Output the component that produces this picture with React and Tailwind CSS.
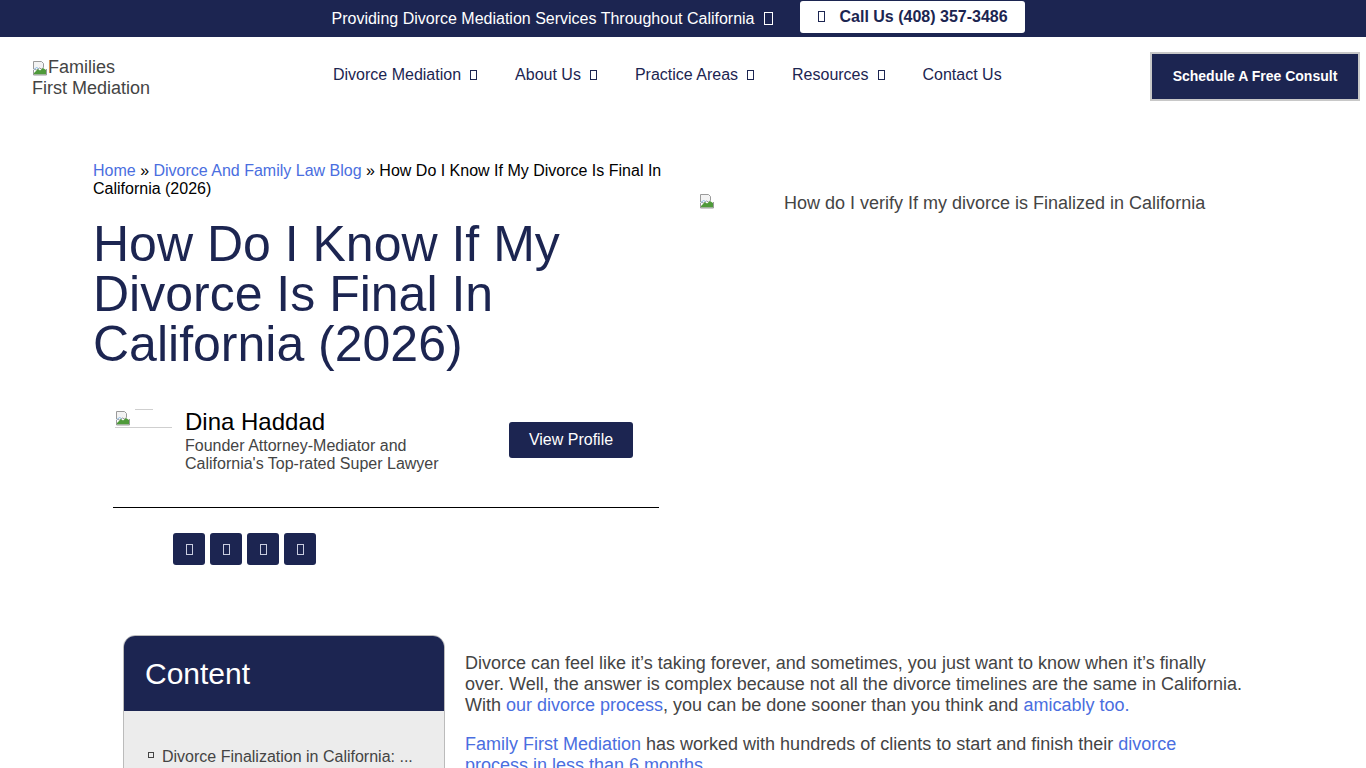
import React from "react";

function BrokenImg({ className = "" }) {
  return (
    <svg width="16" height="16" viewBox="0 0 16 16" className={className}>
      <path d="M1.5 1.5h8l2 2v4l-2 1.5-2-1-3 2-3-1z" fill="#f3f3f3" stroke="#9a9a9a" strokeWidth="1" />
      <path d="M2 13l4-4 2 1.5 3-2.5 3 2v4.5H2z" fill="#4f9a3a" />
      <path d="M2 9.5l2.5-2 2 1" fill="none" stroke="#8bbbe8" strokeWidth="1" />
      <path d="M1.5 10v5h13V9" fill="none" stroke="#9a9a9a" strokeWidth="1" />
    </svg>
  );
}

export default function App() {
  const font = { fontFamily: '"Liberation Sans", Arial, sans-serif' };
  return (
    <div className="w-[1366px] bg-white" style={font}>
      {/* Top bar */}
      <div className="h-[37px] bg-[#1c2551] flex items-center justify-center">
        <div className="flex items-center text-white text-[16px] ml-[-10px]">
          <span>Providing Divorce Mediation Services Throughout California</span>
          <span className="inline-block w-[9px] h-[13px] border border-white ml-[9px]" />
        </div>
        <div className="ml-[27px] h-[32px] mt-[-4px] w-[225px] bg-white rounded-[3px] flex items-center text-[#1c2551] text-[16px] font-bold">
          <span className="inline-block w-[7px] h-[11px] border border-[#1c2551] ml-[18px]" />
          <span className="ml-[15px]">Call Us (408) 357-3486</span>
        </div>
      </div>

      {/* Header */}
      <div className="h-[76px] flex items-center">
        <div className="w-[333px] shrink-0 pl-[32px] text-[18px] leading-[21px] text-[#444] self-start pt-[20px]">
          <div className="flex items-center">
            <BrokenImg />
            <span>Families</span>
          </div>
          <div>First Mediation</div>
        </div>
        <nav className="flex items-center gap-[38px] text-[16px] text-[#1c2551]">
          {["Divorce Mediation", "About Us", "Practice Areas", "Resources"].map((t) => (
            <div key={t} className="flex items-center">
              <span>{t}</span>
              <span className="inline-block w-[7px] h-[10px] border border-[#1c2551] ml-[9px]" />
            </div>
          ))}
          <span>Contact Us</span>
        </nav>
        <div className="flex-1" />
        <div className="mr-[6px] mt-[3px] w-[210px] h-[49px] border-2 border-[#c8c8c8] bg-[#1c2551] flex items-center justify-center text-white text-[14px] font-bold">
          Schedule A Free Consult
        </div>
      </div>

      {/* Hero */}
      <div className="flex pt-[49px]">
        <div className="w-[570px] ml-[93px]">
          <div className="text-[16px] leading-[18px] text-black">
            <span className="text-[#4a6ee0]">Home</span> »{" "}
            <span className="text-[#4a6ee0]">Divorce And Family Law Blog</span> » How Do I Know If My Divorce Is Final In California (2026)
          </div>
          <h1 className="mt-[21px] text-[50px] leading-[50px] text-[#1c2551] font-normal">
            How Do I Know If My Divorce Is Final In California (2026)
          </h1>
          <div className="mt-[40px] ml-[20px] w-[546px]">
            <div className="flex items-start">
              <div className="w-[57px] h-[19px] mt-[0px] ml-[2px] border-b border-[#cfcfcf] relative">
                <div className="absolute top-0 left-[20px] w-[18px] border-t border-[#cfcfcf]" />
                <BrokenImg className="absolute top-[1px] left-0" />
              </div>
              <div className="ml-[13px]">
                <div className="text-[24px] leading-[26px] text-black">Dina Haddad</div>
                <div className="text-[16px] leading-[18px] text-[#444] mt-[2px]">
                  Founder Attorney-Mediator and
                  <br />
                  California's Top-rated Super Lawyer
                </div>
              </div>
              <div className="flex-1" />
              <div className="mt-[13px] mr-[26px] w-[124px] h-[36px] bg-[#1c2551] rounded-[3px] flex items-center justify-center text-white text-[16px]">
                View Profile
              </div>
            </div>
            <div className="mt-[34px] h-px bg-black" />
            <div className="mt-[25px] ml-[60px] flex gap-[5px]">
              {[0, 1, 2, 3].map((i) => (
                <div key={i} className="w-[32px] h-[32px] bg-[#1c2551] rounded-[3px] flex items-center justify-center">
                  <span className="inline-block w-[7px] h-[11px] border border-[#c9cde0]" />
                </div>
              ))}
            </div>
          </div>
        </div>
        <div className="ml-[36px] pt-[31px] flex items-start">
          <BrokenImg />
          <span className="ml-[69px] text-[18px] leading-[21px] text-[#444]">
            How do I verify If my divorce is Finalized in California
          </span>
        </div>
      </div>

      {/* Content */}
      <div className="flex mt-[70px] pl-[123px]">
        <div className="w-[322px] shrink-0 rounded-t-[12px] overflow-hidden border border-[#bbb]">
          <div className="h-[75px] bg-[#1c2551] flex items-center pl-[21px] text-white text-[30px]">Content</div>
          <div className="bg-[#ececec] h-[60px] pt-[34px] pl-[24px] flex items-start text-[16px] text-[#444]">
            <span className="inline-block w-[6px] h-[6px] border border-[#444] mt-[7px]" />
            <span className="ml-[8px]">Divorce Finalization in California: ...</span>
          </div>
        </div>
        <div className="ml-[20px] w-[780px] text-[18px] leading-[21px] text-[#444] pt-[18px]">
          <p>
            Divorce can feel like it’s taking forever, and sometimes, you just want to know when it’s finally over. Well, the answer is complex because not all the divorce timelines are the same in California. With{" "}
            <span className="text-[#4a6ee0]">our divorce process</span>, you can be done sooner than you think and{" "}
            <span className="text-[#4a6ee0]">amicably too.</span>
          </p>
          <p className="mt-[18px] w-[740px]">
            <span className="text-[#4a6ee0]">Family First Mediation</span> has worked with hundreds of clients to start and finish their{" "}
            <span className="text-[#4a6ee0]">divorce process in less than 6 months</span>.
          </p>
        </div>
      </div>
    </div>
  );
}
